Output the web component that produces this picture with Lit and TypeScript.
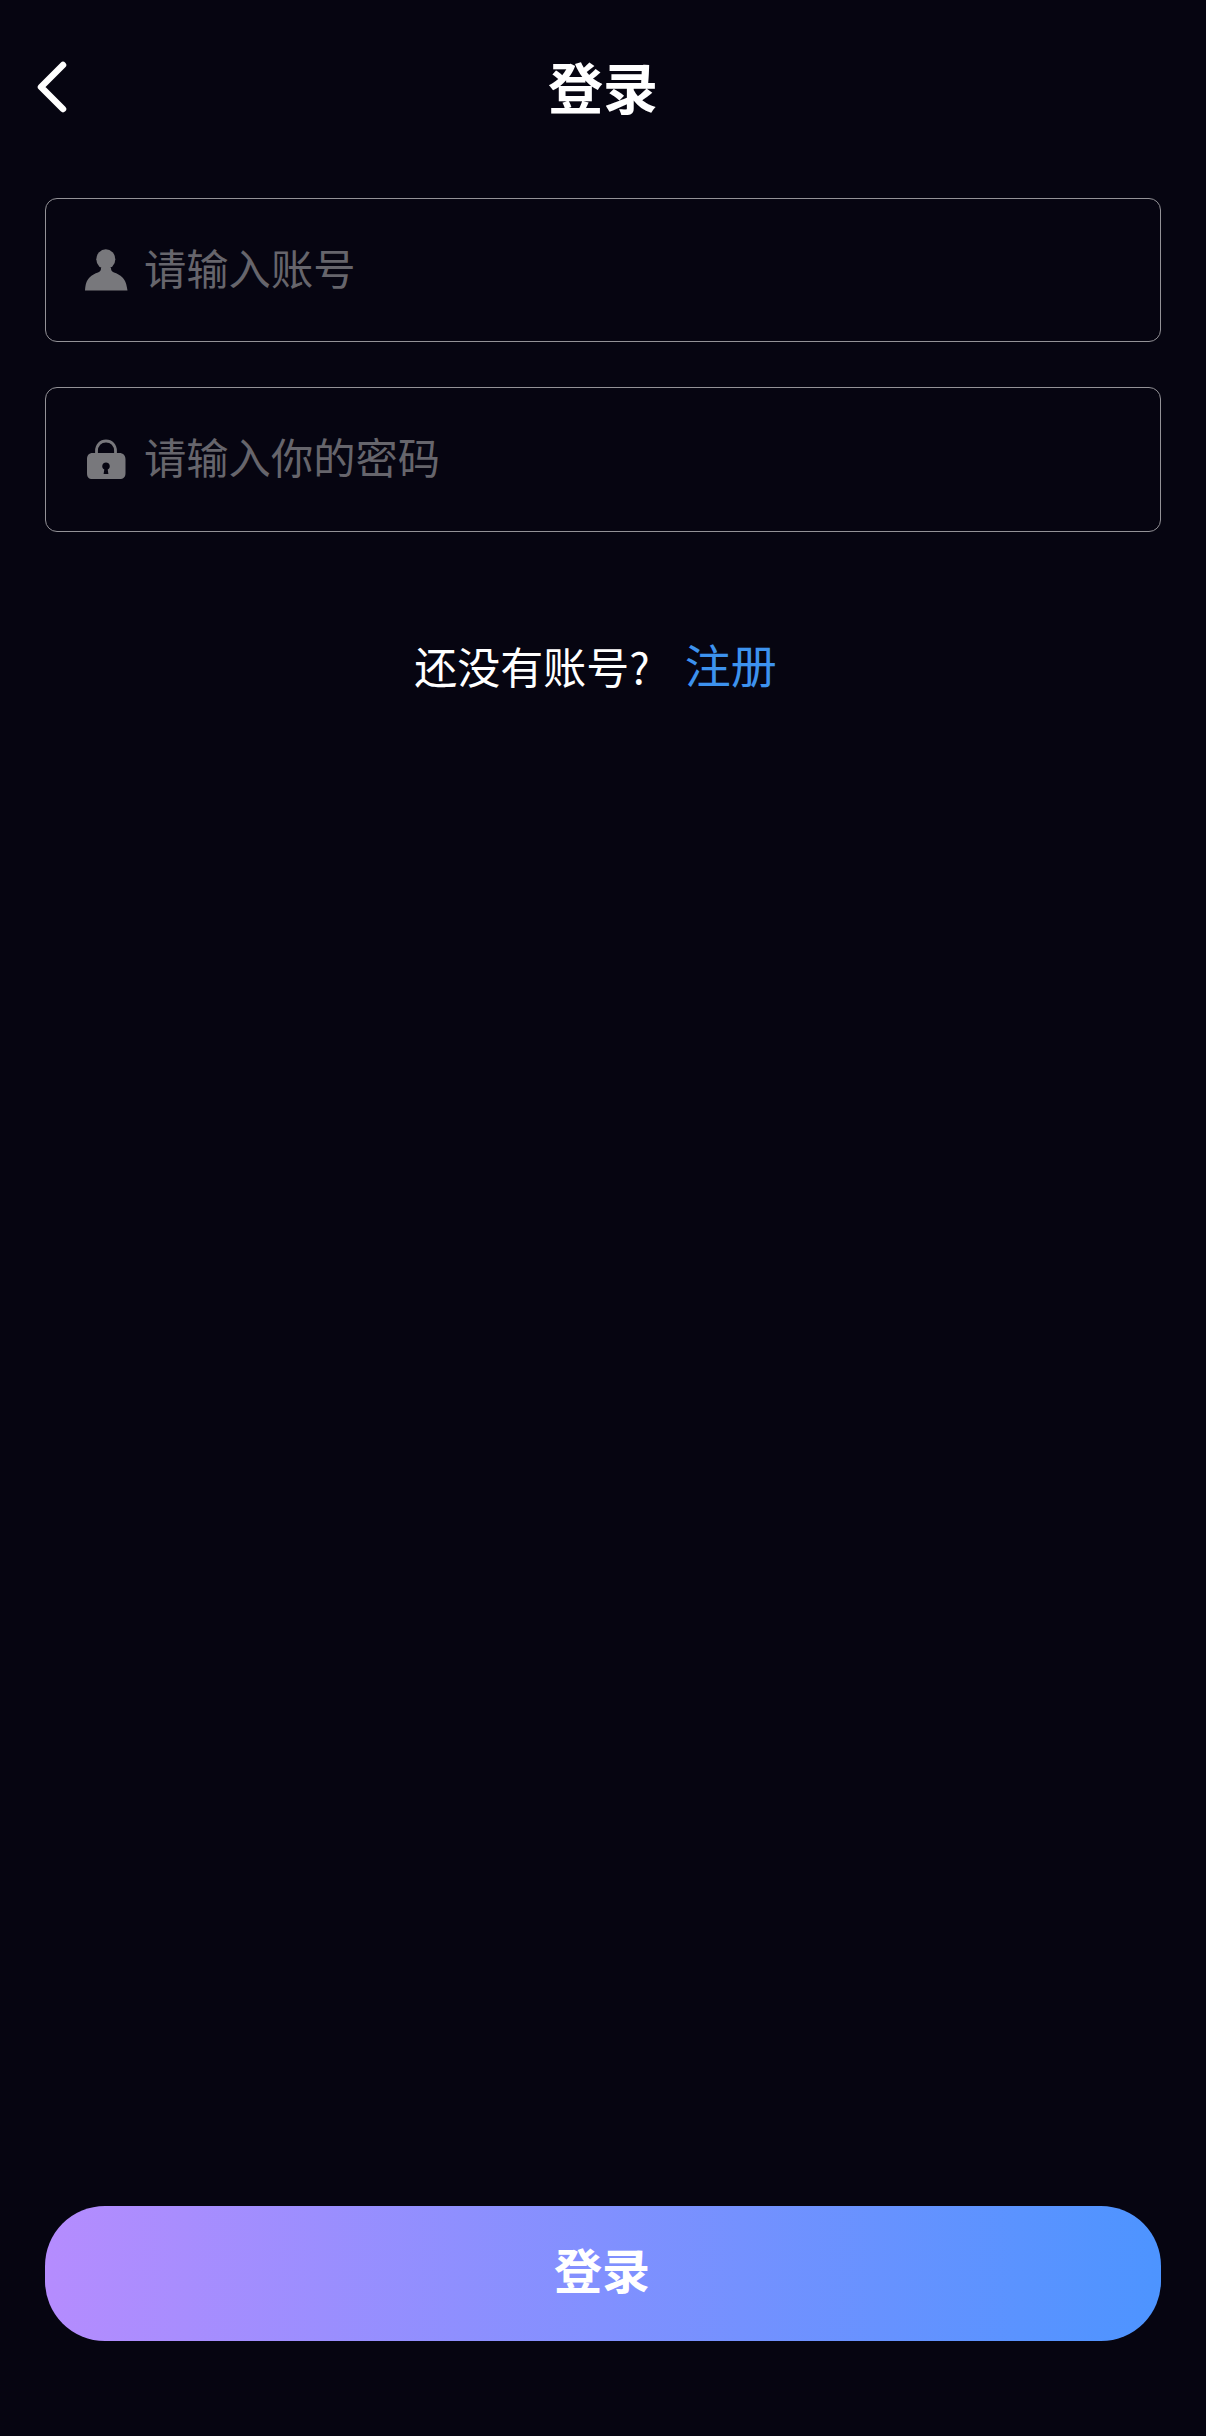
import { LitElement, html, css } from "lit";
import { customElement } from "lit/decorators.js";

@customElement("app-root")
export class AppRoot extends LitElement {
  static styles = css`
    :host {
      display: block;
      width: 1206px;
      height: 2436px;
      background: #060511;
      font-family: "Noto Sans CJK SC", "Noto Sans", sans-serif;
      color: #fff;
      overflow: hidden;
    }
    .page {
      box-sizing: border-box;
      height: 2436px;
      display: flex;
      flex-direction: column;
      padding: 0 45px 95px;
    }
    .nav {
      height: 198px;
      flex: none;
      position: relative;
      display: flex;
      justify-content: center;
      padding-top: 43px;
      box-sizing: border-box;
    }
    .back {
      position: absolute;
      left: -12px;
      top: 57px;
      width: 36px;
      height: 60px;
      display: block;
    }
    .title {
      font-size: 55px;
      font-weight: 700;
      line-height: 84px;
      height: 84px;
    }
    .field {
      box-sizing: border-box;
      height: 144px;
      border: 1px solid #939297;
      border-radius: 12px;
      display: flex;
      align-items: center;
      padding-left: 38px;
      gap: 16px;
    }
    .field + .field {
      height: 145px;
      margin-top: 45px;
    }
    .ico {
      width: 44px;
      height: 44px;
      flex: none;
      display: block;
      fill: #78787c;
    }
    .ph {
      font-size: 42.3px;
      line-height: 60px;
      color: #66656c;
      margin-bottom: 7px;
    }
    .hint {
      margin-top: 96px;
      display: flex;
      justify-content: center;
      align-items: center;
      gap: 35px;
      height: 70px;
      padding-right: 15px;
    }
    .hint .q {
      font-size: 43px;
      line-height: 60px;
      margin-top: 3px;
    }
    .hint .reg {
      font-size: 46px;
      line-height: 60px;
      color: #3d92ee;
    }
    .spacer {
      flex: 1;
    }
    .btn {
      box-sizing: border-box;
      height: 135px;
      padding: 0 2px 12px 0;
      border-radius: 60px;
      background: linear-gradient(90deg, #b58cfe 0%, #4d94ff 100%);
      display: flex;
      align-items: center;
      justify-content: center;
      font-size: 48px;
      font-weight: 700;
      line-height: 60px;
    }
  `;

  render() {
    return html`
      <div class="page">
        <div class="nav">
          <svg class="back" viewBox="0 0 36 60" aria-hidden="true">
            <path d="M30 8 L8 30 L30 52" fill="none" stroke="#fff" stroke-width="6.500" stroke-linecap="round" stroke-linejoin="round"></path>
          </svg>
          <div class="title">登录</div>
        </div>
        <div class="field">
          <svg class="ico" viewBox="0 0 44 44" aria-hidden="true">
            <ellipse cx="21.800" cy="11.300" rx="9.500" ry="10"></ellipse>
            <path d="M1 42.500C1.500 36 2.500 32.500 5.500 29.500 8 27 11 25.500 14 24.500c2-.7 3-2 3-4.500h10c0 2.500 1 3.800 3 4.500 3 1 6 2.500 8.500 5 3 3 4 6.500 5 13z"></path>
          </svg>
          <div class="ph">请输入账号</div>
        </div>
        <div class="field">
          <svg class="ico" viewBox="0 0 44 44" aria-hidden="true">
            <path fill="none" stroke="#78787c" stroke-width="2.800" d="M12.500 16v-3c0-6 4-10 9.500-10s9.500 4 9.500 10v3"></path>
            <path fill-rule="evenodd" d="M9 15h26c4.500 0 6.500 2.500 6.500 6.500V35c0 4-2 6-6 6h-27C4.500 41 3 39 3 35V21.500C3 17.500 4.500 15 9 15zm13 9.500a3.700 3.700 0 0 0-1.700 7l-.7 4.500h4.800l-.7-4.500a3.700 3.700 0 0 0-1.700-7z"></path>
          </svg>
          <div class="ph">请输入你的密码</div>
        </div>
        <div class="hint">
          <span class="q">还没有账号?</span>
          <span class="reg">注册</span>
        </div>
        <div class="spacer"></div>
        <div class="btn">登录</div>
      </div>
    `;
  }
}
